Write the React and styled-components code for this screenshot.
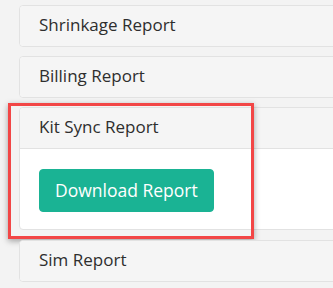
import React from "react";
import styled, { createGlobalStyle } from "styled-components";

const GlobalStyle = createGlobalStyle`
  html, body {
    margin: 0;
    padding: 0;
    background: #f3f3f3;
    overflow: hidden;
  }
  body {
    font-family: "Open Sans", "Liberation Sans", sans-serif;
  }
`;

const Page = styled.div`
  width: 333px;
  height: 288px;
  overflow: hidden;
  padding: 5px 0 0 19px;
  box-sizing: border-box;
`;

const List = styled.div`
  width: 420px;
  display: flex;
  flex-direction: column;
  gap: 9px;
`;

const Panel = styled.div`
  position: relative;
  background: #fff;
  border: 1px solid #e2e2e2;
  border-radius: 4px;
  margin-bottom: ${(p) => (p.$open ? "1px" : "0")};
`;

const Heading = styled.div`
  background: #f5f5f5;
  padding: 9px 19px 11px;
  font-size: 17px;
  line-height: 20px;
  color: #2e2e2e;
  border-radius: 4px 4px 0 0;
  ${(p) => (p.$open ? "border-bottom: 1px solid #e2e2e2;" : "border-radius: 4px;")}
`;

const Body = styled.div`
  padding: 20px 19px 17px;
`;

const Button = styled.button`
  font-family: "Open Sans", "Liberation Sans", sans-serif;
  font-size: 17.5px;
  line-height: 21px;
  padding: 10px 15px;
  color: #fff;
  background: #1ab394;
  border: 1px solid #1ab394;
  border-radius: 4px;
  cursor: pointer;
`;

const Highlight = styled.div`
  position: absolute;
  left: -12px;
  top: -5px;
  width: 246px;
  height: 136px;
  border: 3px solid #f24646;
  box-sizing: border-box;
  box-shadow: 0 2px 6px rgba(0, 0, 0, 0.35);
  pointer-events: none;
`;

const reports = [
  { name: "Shrinkage Report" },
  { name: "Billing Report" },
  { name: "Kit Sync Report", open: true },
  { name: "Sim Report" },
];

export default function App() {
  return (
    <>
      <GlobalStyle />
      <Page>
        <List>
          {reports.map((r) => (
            <Panel key={r.name} $open={r.open}>
              <Heading $open={r.open}>{r.name}</Heading>
              {r.open && (
                <>
                  <Body>
                    <Button>Download Report</Button>
                  </Body>
                  <Highlight />
                </>
              )}
            </Panel>
          ))}
        </List>
      </Page>
    </>
  );
}
